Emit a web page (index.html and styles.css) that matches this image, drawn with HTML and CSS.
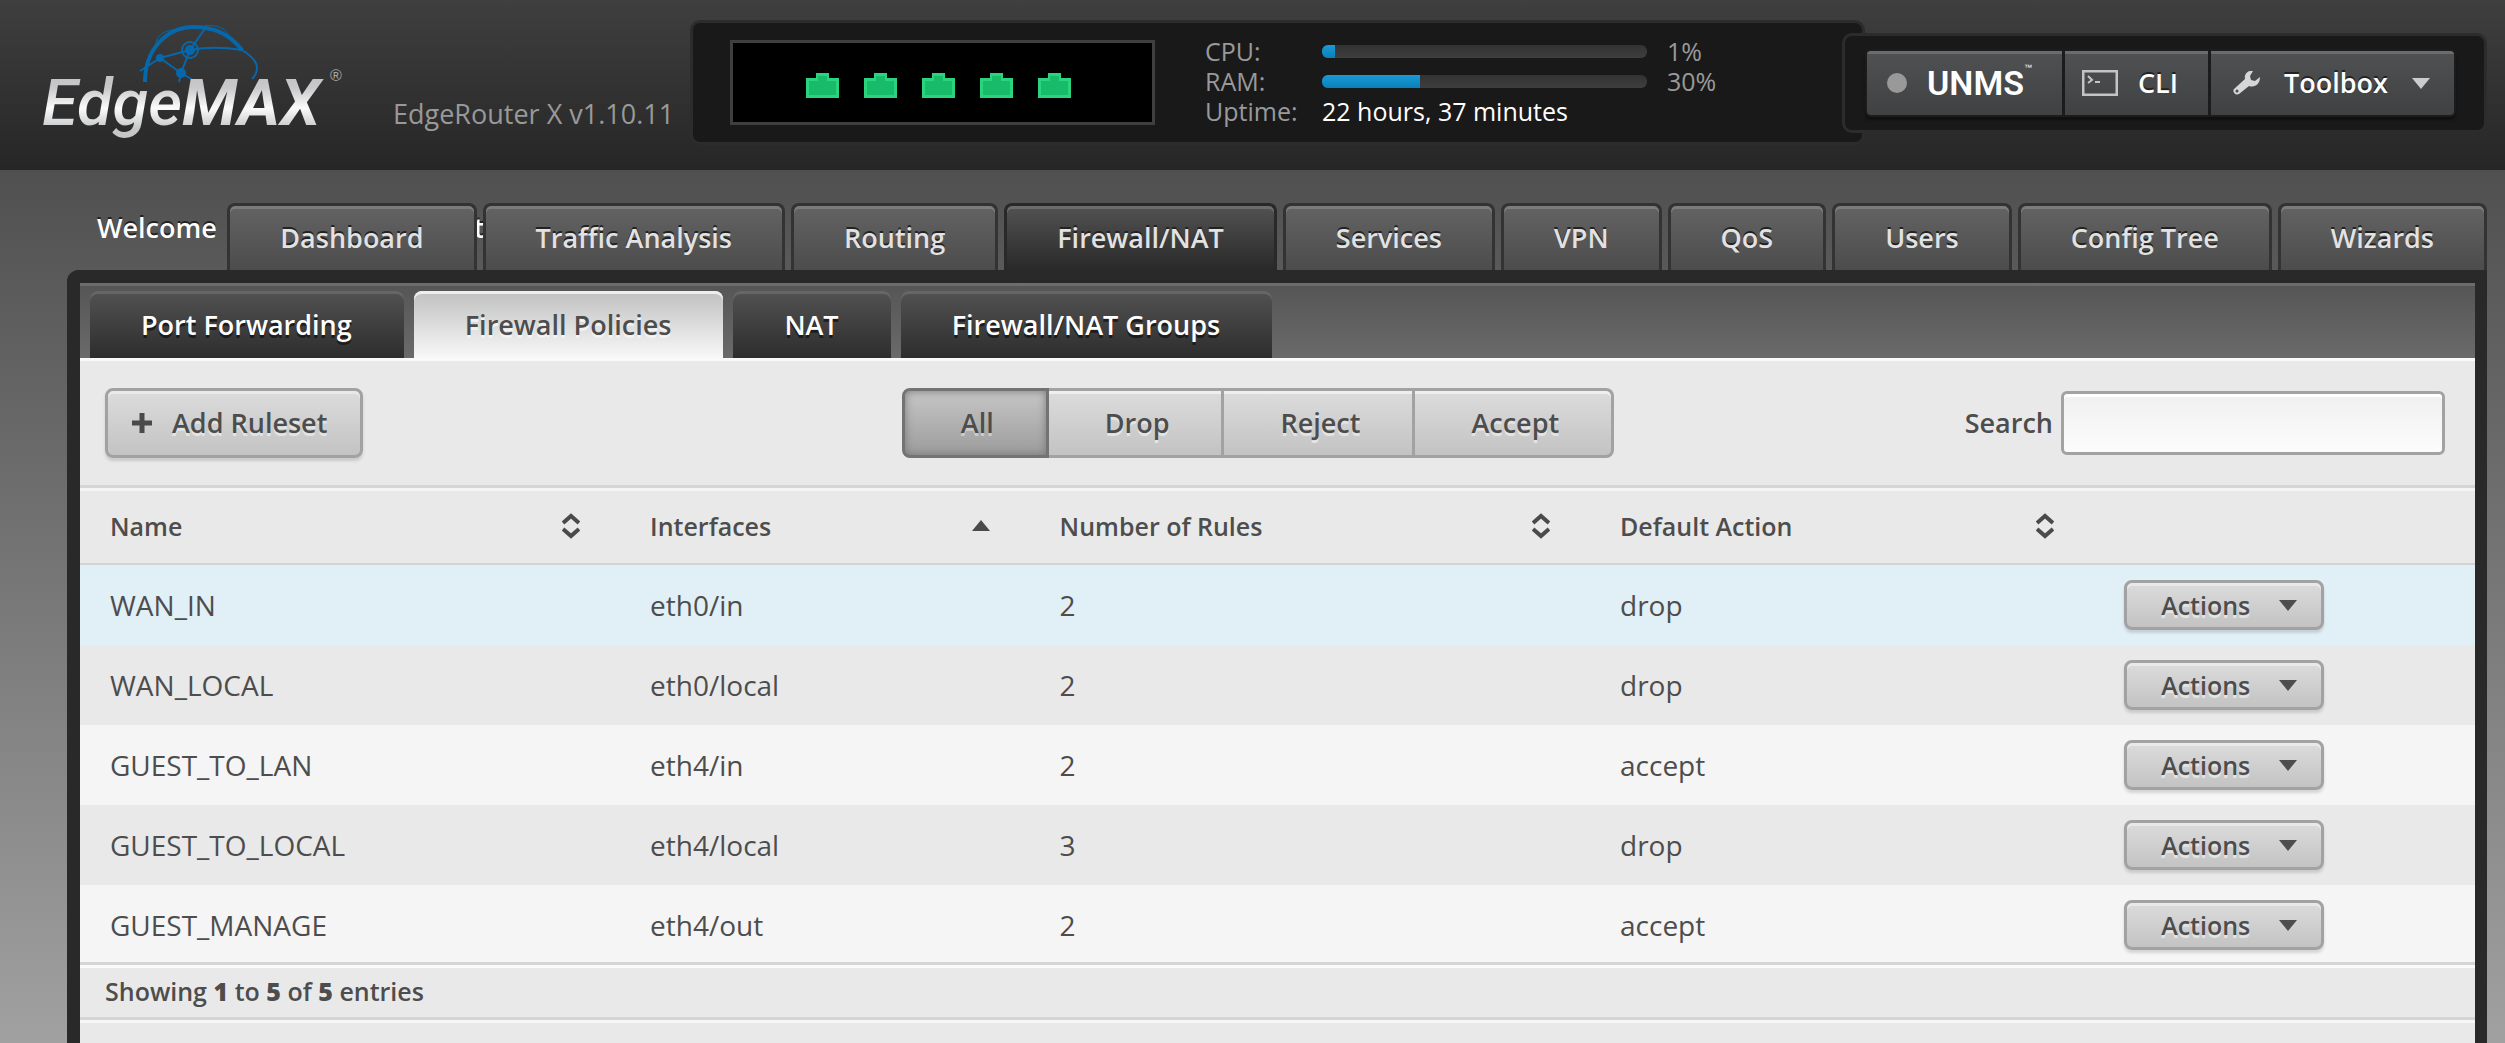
FILE: index.html
```html
<!DOCTYPE html>
<html lang="en">
<head>
<meta charset="utf-8">
<title>EdgeRouter X - Firewall Policies</title>
<link rel="stylesheet" href="styles.css">
</head>
<body>
<svg class="sprite" aria-hidden="true">
  <symbol id="i-port" viewBox="0 0 33 25"><path d="M0 5h10V0h13v5h10v20H0z" fill="#29d47c"/><path d="M3 8h9V3h9v5h9v14H3z" fill="#17bb69"/></symbol>
  <symbol id="i-sort" viewBox="0 0 18 26"><path d="M1 10L9 3l8 7M1 16l8 7 8-7" fill="none" stroke="#4a4a4a" stroke-width="4"/></symbol>
  <symbol id="i-up" viewBox="0 0 18 11"><path d="M0 11L9 0l9 11z" fill="#4a4a4a"/></symbol>
  <symbol id="i-down" viewBox="0 0 18 11"><path d="M0 0h18L9 11z" fill="currentColor"/></symbol>
</svg>

<header class="header">
  <div class="logo">
    <svg class="globe" viewBox="0 0 122 60" aria-hidden="true">
      <g fill="none" stroke="#0668ab">
        <path d="M7 58C7 26 28 3 56 3c24 0 38 10 48 23" stroke-width="4"/>
        <path d="M18 24C16 10 30 4 44 6M66 2c14-2 22 3 25 10" stroke-width="1"/>
        <path d="M22 34L52 26C72 22 92 24 104 26M52 26L68 3M52 26l-9 23-2 9M22 34l21 15 12 7M22 34L2 47M104 26c10 6 15 12 15 18 0 4-2 8-5 11" stroke-width="2"/>
        <circle cx="52" cy="26" r="8" stroke-width="2"/>
      </g>
      <g fill="#0668ab"><circle cx="52" cy="26" r="5"/><circle cx="22" cy="34" r="4"/><circle cx="43" cy="49" r="5"/></g>
    </svg>
    <span class="wordmark">Edge<b>MAX</b></span><span class="reg">®</span>
  </div>
  <div class="model">EdgeRouter X v1.10.11</div>

  <div class="status">
    <div class="ports">
      <svg><use href="#i-port"/></svg><svg><use href="#i-port"/></svg><svg><use href="#i-port"/></svg><svg><use href="#i-port"/></svg><svg><use href="#i-port"/></svg>
    </div>
    <dl class="stats">
      <dt>CPU:</dt><dd><span class="meter"><span class="fill" style="width:4%"></span></span>1%</dd>
      <dt>RAM:</dt><dd><span class="meter"><span class="fill" style="width:30%"></span></span>30%</dd>
      <dt>Uptime:</dt><dd class="uptime">22 hours, 37 minutes</dd>
    </dl>
  </div>

  <div class="tools">
    <div class="tool-group">
      <button type="button" class="tool unms"><span class="dot"></span><span class="unms-name">UNMS</span><sup>™</sup></button>
      <button type="button" class="tool cli">
        <svg class="term" viewBox="0 0 36 26" aria-hidden="true"><rect x="1" y="1" width="34" height="24" fill="none" stroke="#c4c4c4" stroke-width="3"/><path d="M6 6l4 4-4 3M13 12h5" fill="none" stroke="#c4c4c4" stroke-width="2"/></svg>
        CLI</button>
      <button type="button" class="tool toolbox">
        <svg class="wrench" viewBox="0 0 27 24" aria-hidden="true"><path d="M20 0c-5-1-9 3-8 8L1 18c-2 2 1 7 5 5l10-8c6 2 11-2 11-9l-5 4-4-1-1-4z" fill="#d6d6d6"/><circle cx="4" cy="20" r="1.500" fill="#4a4b4d"/></svg>
        Toolbox
        <svg class="arrow" aria-hidden="true"><use href="#i-down"/></svg></button>
    </div>
  </div>
</header>

<div class="page">
  <div class="topbar">
    <div class="welcome"><span>Welcome</span><span>t</span></div>
    <nav class="tabs">
      <a href="#">Dashboard</a>
      <a href="#">Traffic Analysis</a>
      <a href="#">Routing</a>
      <a href="#" class="active" aria-current="page">Firewall/NAT</a>
      <a href="#">Services</a>
      <a href="#">VPN</a>
      <a href="#">QoS</a>
      <a href="#">Users</a>
      <a href="#">Config Tree</a>
      <a href="#">Wizards</a>
    </nav>
  </div>

  <main class="panel">
    <nav class="subtabs">
      <a href="#">Port Forwarding</a>
      <a href="#" class="active" aria-current="page">Firewall Policies</a>
      <a href="#">NAT</a>
      <a href="#">Firewall/NAT Groups</a>
    </nav>

    <div class="toolbar">
      <button type="button" class="btn add"><svg class="plus" viewBox="0 0 20 20" aria-hidden="true"><path d="M10 0v20M0 10h20" stroke="#4a4a4a" stroke-width="5"/></svg>Add Ruleset</button>
      <div class="filter">
        <button type="button" class="on" aria-pressed="true">All</button>
        <button type="button">Drop</button>
        <button type="button">Reject</button>
        <button type="button">Accept</button>
      </div>
      <div class="search"><label for="search">Search</label><input id="search" type="text"></div>
    </div>

    <table class="rules">
      <colgroup><col class="c-name"><col class="c-if"><col class="c-num"><col class="c-def"><col></colgroup>
      <thead>
        <tr>
          <th><button type="button">Name<svg class="sort"><use href="#i-sort"/></svg></button></th>
          <th aria-sort="ascending"><button type="button">Interfaces<svg class="up"><use href="#i-up"/></svg></button></th>
          <th><button type="button">Number of Rules<svg class="sort"><use href="#i-sort"/></svg></button></th>
          <th><button type="button">Default Action<svg class="sort"><use href="#i-sort"/></svg></button></th>
          <td></td>
        </tr>
      </thead>
      <tbody>
        <tr class="hover"><td>WAN_IN</td><td>eth0/in</td><td>2</td><td>drop</td><td><button type="button" class="btn small">Actions<svg class="arrow"><use href="#i-down"/></svg></button></td></tr>
        <tr><td>WAN_LOCAL</td><td>eth0/local</td><td>2</td><td>drop</td><td><button type="button" class="btn small">Actions<svg class="arrow"><use href="#i-down"/></svg></button></td></tr>
        <tr><td>GUEST_TO_LAN</td><td>eth4/in</td><td>2</td><td>accept</td><td><button type="button" class="btn small">Actions<svg class="arrow"><use href="#i-down"/></svg></button></td></tr>
        <tr><td>GUEST_TO_LOCAL</td><td>eth4/local</td><td>3</td><td>drop</td><td><button type="button" class="btn small">Actions<svg class="arrow"><use href="#i-down"/></svg></button></td></tr>
        <tr><td>GUEST_MANAGE</td><td>eth4/out</td><td>2</td><td>accept</td><td><button type="button" class="btn small">Actions<svg class="arrow"><use href="#i-down"/></svg></button></td></tr>
      </tbody>
    </table>
    <div class="info">Showing <b>1</b> to <b>5</b> of <b>5</b> entries</div>
  </main>
</div>
</body>
</html>
```
FILE: styles.css
```css
* { box-sizing: border-box; }

body {
  margin: 0;
  min-height: 100vh;
  display: flex;
  flex-direction: column;
  font: 27px/38px "Open Sans", "Noto Sans", sans-serif;
  color: #4d4d4d;
  background: linear-gradient(#505050 170px, #a1a1a1 100%);
}

button, input { font: inherit; color: inherit; margin: 0; }
button { border: 0; background: none; padding: 0; white-space: nowrap; cursor: pointer; }
a { color: inherit; text-decoration: none; }
svg { flex: none; display: block; }
.sprite { display: none; }

/* Header */
.header {
  height: 170px;
  display: flex;
  align-items: flex-start;
  padding: 20px 18px 0 42px;
  background: linear-gradient(#3f3f3f, #262626);
}
.logo { position: relative; width: 351px; padding-top: 41px; white-space: nowrap; }
.globe { position: absolute; left: 96px; top: 4px; width: 122px; height: 60px; }
.wordmark {
  position: relative;
  display: inline-block;
  padding-right: 6px;
  font: italic 500 65px/84px Roboto, "Liberation Sans", sans-serif;
  color: transparent;
  background: linear-gradient(#c4c4c6 20%, #c9c9cb 32%, #fbfbfb 56%, #c6c7c9 80%);
  background-clip: text;
}
.wordmark b { font-weight: 700; }
.reg { position: absolute; left: 288px; top: 46px; font: 16px/20px "Liberation Sans", sans-serif; color: #a8a8a8; }
.model { width: 297px; padding-top: 75px; color: #999; white-space: nowrap; }

.status {
  flex: 1;
  height: 125px;
  display: flex;
  padding: 17px 37px;
  background: #191919;
  border: 3px solid #2c2c2c;
  border-radius: 10px;
}
.ports {
  width: 425px;
  height: 85px;
  display: flex;
  gap: 25px;
  padding: 30px 0 0 73px;
  background: #000;
  border: 3px solid #3f3f3f;
}
.ports svg { width: 33px; height: 25px; }
.stats {
  display: grid;
  grid-template-columns: 117px auto;
  grid-auto-rows: 30px;
  margin: -4px 0 0 50px;
  font-size: 25px;
  line-height: 30px;
  color: #999;
}
.stats dd { margin: 0; display: flex; align-items: center; white-space: nowrap; }
.stats .uptime { color: #fff; }
.meter {
  width: 325px;
  height: 13px;
  margin-right: 20px;
  border-radius: 6px;
  overflow: hidden;
  background: linear-gradient(#333, #3e3e3e);
}
.fill { display: block; height: 13px; background: linear-gradient(#1a9ad6, #0a80ba); }

.tools {
  margin: 13px 0 0 -23px;
  height: 100px;
  padding: 13px 28px 0 20px;
  background: #191919;
  border: 3px solid #2c2c2c;
  border-radius: 10px;
}
.tool-group {
  display: flex;
  gap: 3px;
  border: 2px solid #1c1c1c;
  border-radius: 6px;
  background: #1c1c1c;
  box-shadow: 0 3px 2px #101010;
  overflow: hidden;
}
.tool {
  height: 64px;
  display: flex;
  align-items: center;
  font-weight: 600;
  color: #fff;
  text-shadow: 0 -2px 0 #222;
  background: linear-gradient(#505153, #404143);
  box-shadow: inset 0 3px 0 #6b6c6e;
}
.unms { width: 195px; padding-left: 20px; }
.dot { width: 20px; height: 20px; margin-right: 20px; border-radius: 50%; background: #999; }
.unms-name { font: 600 34px/48px Roboto, "Liberation Sans", sans-serif; text-shadow: none; }
.unms sup { align-self: flex-start; padding-top: 12px; font: 8px/10px "Liberation Sans", sans-serif; text-shadow: none; }
.cli { width: 143px; padding-left: 17px; gap: 20px; }
.term { width: 36px; height: 26px; }
.toolbox { width: 243px; padding-left: 22px; gap: 24px; }
.wrench { width: 27px; height: 24px; }
.arrow { width: 18px; height: 11px; }
.tool .arrow { color: #ccc; }

/* Page frame and main tabs */
.page { flex: 1; display: flex; flex-direction: column; padding: 33px 18px 0 67px; }
.topbar { display: grid; }
.topbar > * { grid-area: 1 / 1; }
.welcome {
  display: flex;
  gap: 257px;
  padding: 6px 0 0 30px;
  font-weight: 600;
  color: #fff;
  text-shadow: 0 -2px 0 #222;
}
.tabs { position: relative; display: flex; justify-content: flex-end; gap: 6px; }
.tabs a {
  height: 67px;
  padding: 13px 50px 0;
  font-weight: 600;
  white-space: nowrap;
  color: #e2e2e2;
  text-shadow: 0 -2px 0 #222;
  border: 3px solid #333;
  border-bottom: 0;
  border-radius: 8px 8px 0 0;
  background: linear-gradient(#636363, #4c4c4c);
  box-shadow: inset 0 3px 0 #7c7c7c;
}
.tabs .active {
  border-color: #292929;
  background: linear-gradient(#525252, #292929);
  box-shadow: inset 0 3px 0 #6c6c6c;
}

.panel {
  flex: 1;
  border: solid #292929;
  border-width: 13px 12px 0 13px;
  border-radius: 12px 0 0 0;
  background: #e9e9e9;
}
.subtabs {
  display: flex;
  gap: 10px;
  padding: 8px 10px 0;
  background: linear-gradient(#555, #6a6a6a);
  box-shadow: inset 0 3px 0 #6c6c6c;
}
.subtabs a {
  height: 67px;
  padding: 15px 52px 0 51px;
  font-weight: 600;
  white-space: nowrap;
  color: #fff;
  text-shadow: 0 3px 0 #1c1c1c;
  border-radius: 8px 8px 0 0;
  background: linear-gradient(#525252, #2d2d2d);
  box-shadow: inset 0 3px 0 #666;
}
.subtabs .active {
  color: #4d4d4d;
  text-shadow: 0 3px 0 #f3f3f3;
  background: linear-gradient(#c0c0c0, #f8f8f8);
  box-shadow: inset 0 3px 0 #eee;
}

/* Toolbar */
.toolbar {
  display: grid;
  grid-template-columns: 1fr auto 1fr;
  align-items: center;
  padding: 27px 30px 27px 25px;
  border-top: 3px solid #fafafa;
  border-bottom: 3px solid #d5d5d5;
}
.btn {
  display: flex;
  align-items: center;
  justify-self: start;
  font-weight: 600;
  text-shadow: 0 3px 0 #e4e4e4;
  border: 3px solid #a2a2a2;
  border-radius: 8px;
  background: linear-gradient(#dcdcdc, #c3c3c3);
  box-shadow: inset 0 3px 0 #e9e9e9, 0 3px 3px #0002;
}
.add { height: 70px; padding: 0 33px 0 24px; gap: 20px; }
.plus { width: 20px; height: 20px; }
.filter { display: flex; margin-right: 34px; }
.filter button {
  height: 70px;
  padding: 0 52px 0 56px;
  font-weight: 600;
  text-shadow: 0 3px 0 #e4e4e4;
  border: solid #a2a2a2;
  border-width: 3px 3px 3px 0;
  background: linear-gradient(#dcdcdc, #c3c3c3);
  box-shadow: inset 0 3px 0 #efefef;
}
.filter button:last-child { border-radius: 0 8px 8px 0; }
.filter .on {
  border: 3px solid #737373;
  border-radius: 8px 0 0 8px;
  text-shadow: 0 3px 0 #ccc;
  background: linear-gradient(#c6c6c6, #9c9c9c);
  box-shadow: inset 0 0 8px #777;
}
.search { display: flex; justify-content: flex-end; align-items: center; gap: 8px; font-weight: 600; }
.search input {
  width: 384px;
  height: 64px;
  border: 3px solid #a2a2a2;
  border-radius: 6px;
  background: linear-gradient(#f0f0f0, #fcfcfc);
  box-shadow: inset 0 3px 0 #fff;
}

/* Rules table */
.rules { width: 100%; table-layout: fixed; border-collapse: separate; border-spacing: 0; }
.c-name { width: 22.55%; }
.c-if { width: 17.1%; }
.c-num { width: 23.4%; }
.c-def { width: 21.05%; }
.rules thead tr { height: 77px; box-shadow: inset 0 3px 0 #f5f5f5; }
.rules thead th, .rules thead td { border-bottom: 2px solid #d3d3d3; }
.rules th, .rules td { padding: 0 0 0 30px; text-align: left; }
.rules td { font-size: 28px; }
.rules th button {
  width: 100%;
  display: flex;
  justify-content: space-between;
  align-items: center;
  padding-right: 40px;
  font-size: 25px;
  font-weight: 600;
}
.sort { width: 18px; height: 26px; }
.up { width: 18px; height: 11px; }
.rules tbody tr { height: 80px; background: #e9e9e9; }
.rules tbody tr:nth-child(odd) { background: #f5f5f5; }
.rules tbody tr.hover:first-child { background: #e1eff7; }
.small { width: 200px; height: 50px; padding: 0 24px 0 34px; justify-content: space-between; font-size: 25px; }

.info {
  position: relative;
  margin-top: -3px;
  padding: 7px 25px;
  font-size: 25px;
  font-weight: 600;
  background: #e9e9e9;
  border-top: 3px solid #d5d5d5;
  border-bottom: 3px solid #d5d5d5;
  box-shadow: inset 0 3px 0 #fafafa, 0 3px 0 #f7f7f7;
}
```
